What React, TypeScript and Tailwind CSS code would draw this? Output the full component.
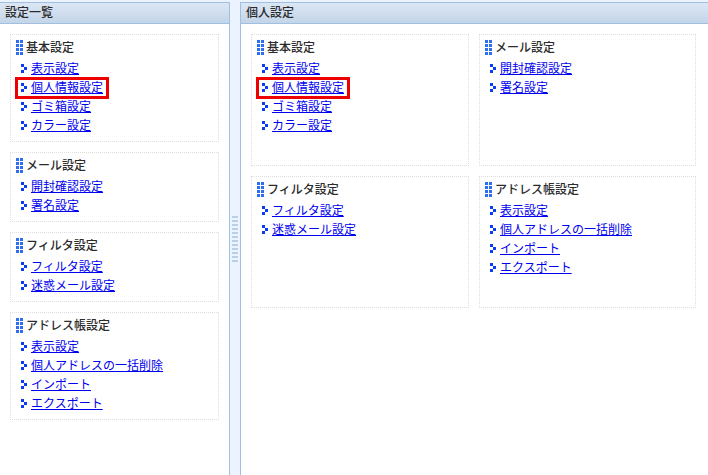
const font = "font-['Liberation_Sans','Noto_Sans_CJK_JP',sans-serif]";

type Group = { title: string; links: string[] };

const basic: Group = { title: '基本設定', links: ['表示設定', '個人情報設定', 'ゴミ箱設定', 'カラー設定'] };
const mail: Group = { title: 'メール設定', links: ['開封確認設定', '署名設定'] };
const filter: Group = { title: 'フィルタ設定', links: ['フィルタ設定', '迷惑メール設定'] };
const address: Group = { title: 'アドレス帳設定', links: ['表示設定', '個人アドレスの一括削除', 'インポート', 'エクスポート'] };

const GridIcon = () => (
  <svg width="7" height="15" viewBox="0 0 7 15" className="shrink-0 self-start">
    {[0, 4, 8, 12].map((y) => (
      <g key={y} fill="#2f6cf0">
        <rect x="0" y={y} width="3" height="3" />
        <rect x="4" y={y} width="3" height="3" />
      </g>
    ))}
  </svg>
);

const ArrowIcon = () => (
  <svg width="6" height="9" viewBox="0 0 6 9" className="shrink-0">
    <g fill="#0a3cf5">
      <rect x="0" y="0" width="3" height="3" />
      <rect x="3" y="3" width="3" height="3" />
      <rect x="0" y="6" width="3" height="3" />
    </g>
  </svg>
);

const SettingsBox = ({ group, className }: { group: Group; className: string }) => (
  <div className={`border border-dotted border-[#dedede] pl-[5px] pt-[5px] ${className}`}>
    <div className="flex h-[16px] items-center gap-[3px] text-[12px] font-medium leading-[16px] text-[#2b2b2b]">
      <GridIcon />
      <span>{group.title}</span>
    </div>
    <ul className="mt-[3px] flex flex-col pl-[5px]">
      {group.links.map((link) => (
        <li key={link} className="relative flex h-[19px] items-center gap-[4px] text-[12px]">
          <ArrowIcon />
          <a href="#" className="text-[#0000ee] underline">{link}</a>
          {link === '個人情報設定' && (
            <span className="absolute left-[-6px] top-[-1px] h-[22px] w-[94px] border-[3px] border-[#ee0000]" />
          )}
        </li>
      ))}
    </ul>
  </div>
);

const PanelHeader = ({ title }: { title: string }) => (
  <div className="h-[21px] border-b border-[#a3bfdf] bg-gradient-to-b from-[#dce7f4] to-[#c3d5e9] pl-[5px] text-[12px] font-medium leading-[20px] text-[#2b2b2b]">
    {title}
  </div>
);

export default function App() {
  return (
    <div className={`${font} flex h-[475px] w-[708px] overflow-hidden bg-[#eaf3fe] pt-[2px]`}>
      <div className="w-[230px] shrink-0 border-r border-t border-[#a3bfdf] bg-white">
        <PanelHeader title="設定一覧" />
        <div className="flex flex-col gap-[10px] px-[10px] pt-[10px]">
          <SettingsBox group={basic} className="h-[108px]" />
          <SettingsBox group={mail} className="h-[70px]" />
          <SettingsBox group={filter} className="h-[70px]" />
          <SettingsBox group={address} className="h-[108px]" />
        </div>
      </div>
      <div className="flex w-[10px] shrink-0 items-center justify-center">
        <div className="flex flex-col gap-[2px]">
          {Array.from({ length: 12 }).map((_, i) => (
            <div key={i} className="h-[2px] w-[6px] bg-[#b9d0e8]" />
          ))}
        </div>
      </div>
      <div className="flex-1 border-l border-t border-[#a3bfdf] bg-white">
        <PanelHeader title="個人設定" />
        <div className="grid grid-cols-[218px_217px] gap-[10px] pl-[10px] pt-[10px]">
          <SettingsBox group={basic} className="h-[132px]" />
          <SettingsBox group={mail} className="h-[132px]" />
          <SettingsBox group={filter} className="h-[132px]" />
          <SettingsBox group={address} className="h-[132px]" />
        </div>
      </div>
    </div>
  );
}
